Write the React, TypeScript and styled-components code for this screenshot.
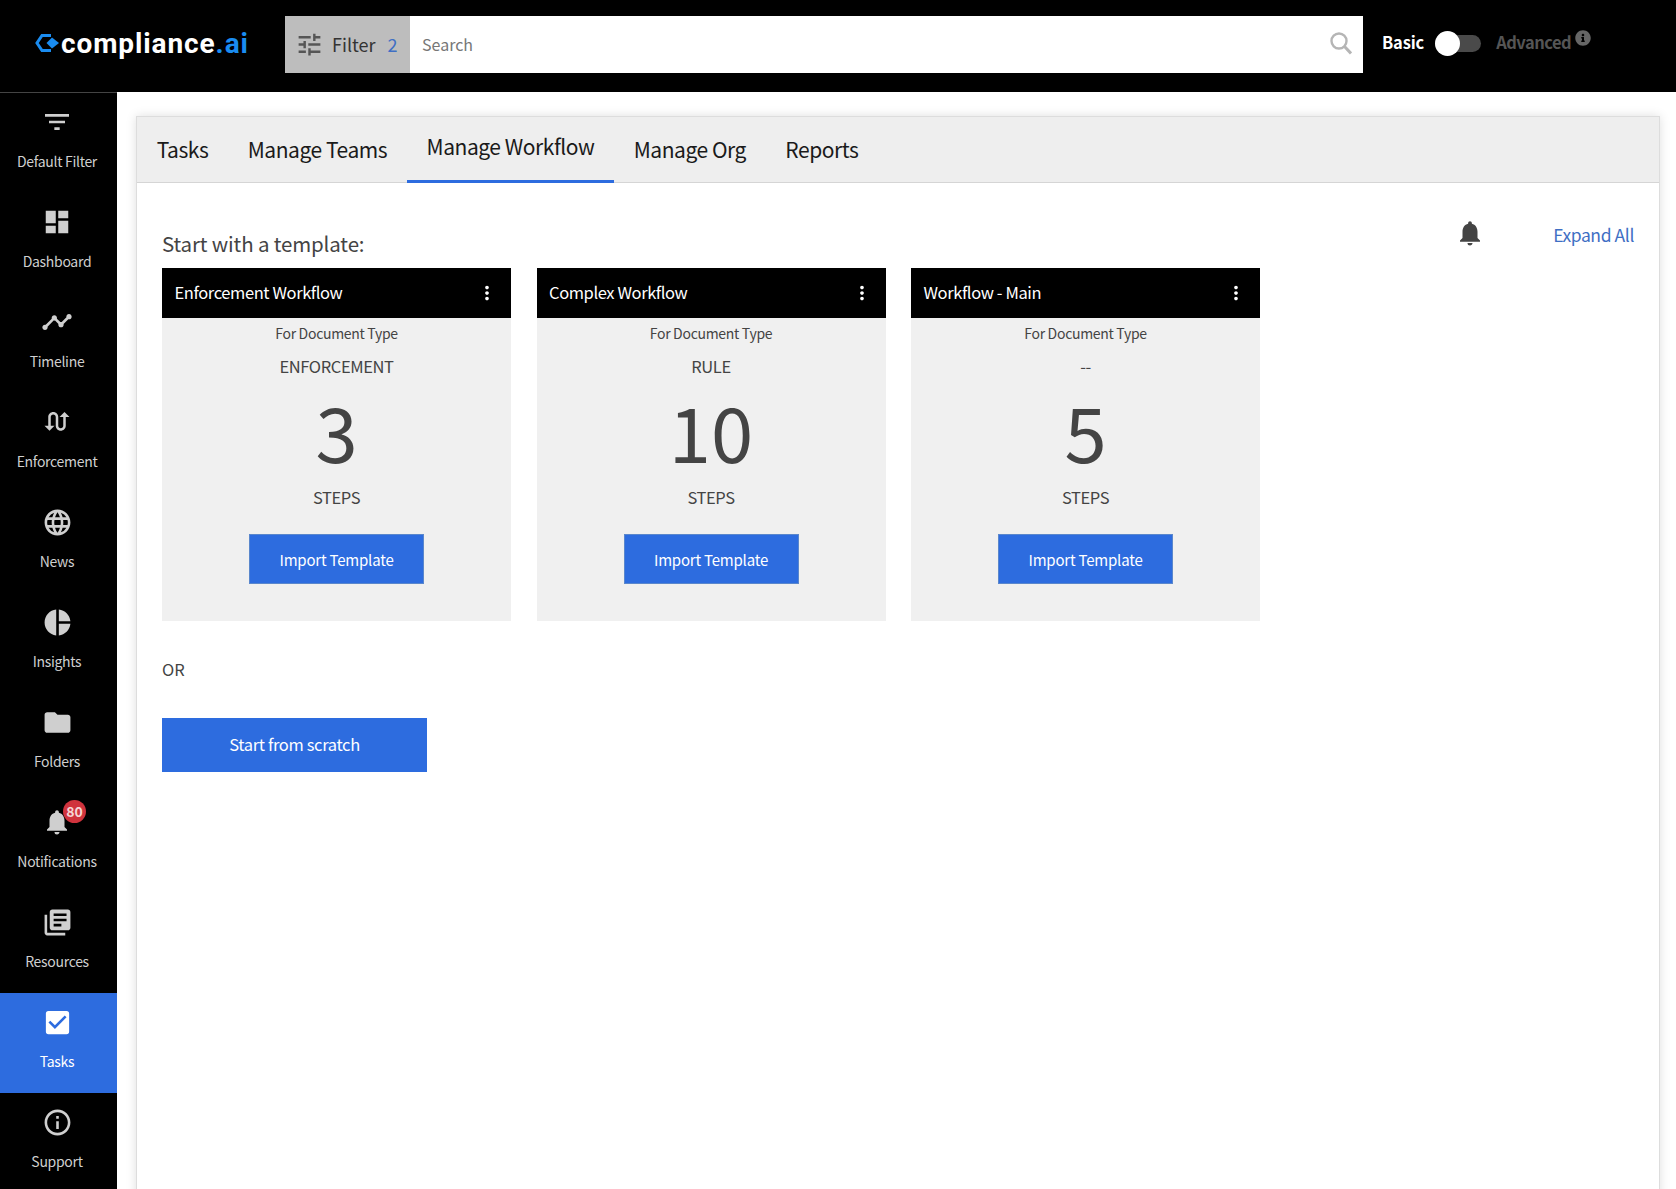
import styled, { createGlobalStyle } from 'styled-components';
import {
  MdCheckBox,
  MdDashboard,
  MdFilterList,
  MdFolder,
  MdInfoOutline,
  MdLanguage,
  MdLibraryBooks,
  MdMoreVert,
  MdNotifications,
  MdPieChart,
  MdSwapCalls,
  MdTimeline,
  MdTune,
} from 'react-icons/md';
import { FaInfoCircle } from 'react-icons/fa';

const FONT = '"Noto Sans CJK JP", "Noto Sans", sans-serif';

const GlobalStyle = createGlobalStyle`
  html, body {
    margin: 0;
    padding: 0;
    height: 100%;
    overflow: hidden;
    background: #fff;
    font-family: ${FONT};
  }
  * {
    box-sizing: border-box;
  }
`;

const Page = styled.div`
  height: 100vh;
  display: flex;
  flex-direction: column;
  overflow: hidden;
`;

const TopBar = styled.header`
  flex: 0 0 92px;
  background: #000;
  display: flex;
  align-items: flex-start;
`;

const Logo = styled.div`
  width: 285px;
  height: 86px;
  padding-left: 35px;
  display: flex;
  align-items: center;
  gap: 2px;
`;

const LogoText = styled.span`
  font-family: 'Roboto', sans-serif;
  font-weight: 700;
  font-size: 28px;
  letter-spacing: 0.9px;
  color: #fff;
  span {
    color: #1a8cf0;
  }
`;

const FilterButton = styled.div`
  margin-top: 16px;
  width: 125px;
  height: 57px;
  background: #bdbdbd;
  display: flex;
  align-items: center;
  padding: 0 0 2px 10px;
  color: #333;
  font-size: 18px;
  svg {
    color: #555;
    margin: 2px 8px 0 0;
  }
`;

const FilterCount = styled.span`
  color: #3f6fc4;
  margin-left: 12px;
`;

const SearchBox = styled.div`
  margin-top: 16px;
  width: 953px;
  height: 57px;
  background: #fff;
  display: flex;
  align-items: center;
  justify-content: space-between;
  padding: 0 11px 2px 12px;
  color: #777;
  font-size: 16px;
`;

const ModeSwitch = styled.div`
  height: 86px;
  margin-left: 19px;
  display: flex;
  align-items: center;
`;

const ModeLabel = styled.span<{ $active?: boolean }>`
  font-weight: 700;
  font-size: 16.5px;
  letter-spacing: ${(p) => (p.$active ? '-0.15px' : '-0.5px')};
  padding-bottom: 2px;
  color: ${(p) => (p.$active ? '#fff' : '#555')};
`;

const Toggle = styled.div`
  position: relative;
  width: 46px;
  height: 17px;
  margin: 0 15px 0 11px;
  border-radius: 9px;
  background: #4a4a4a;
`;

const ToggleKnob = styled.div`
  position: absolute;
  left: 0;
  top: -4px;
  width: 25px;
  height: 25px;
  border-radius: 50%;
  background: #fff;
`;

const InfoMark = styled.span`
  display: flex;
  color: #666;
  margin: -10px 0 0 4px;
`;

const Body = styled.div`
  flex: 1;
  display: flex;
  min-height: 0;
`;

const Sidebar = styled.nav`
  flex: 0 0 117px;
  background: #000;
  border-top: 1px solid #444;
`;

const NavItem = styled.div<{ $active?: boolean }>`
  height: 100px;
  padding: 16px 3px 0 0;
  display: flex;
  flex-direction: column;
  align-items: center;
  background: ${(p) => (p.$active ? '#2d6cdf' : 'transparent')};
  color: ${(p) => (p.$active ? '#fff' : '#cfcfcf')};
`;

const NavIcon = styled.div`
  position: relative;
  height: 26px;
  display: flex;
  align-items: center;
  justify-content: center;
`;

const NavBadge = styled.span`
  position: absolute;
  left: 21px;
  top: -9px;
  width: 23px;
  height: 23px;
  border-radius: 50%;
  background: #d0333d;
  color: #f5d5d5;
  font-size: 14px;
  font-weight: 700;
  line-height: 23px;
  text-align: center;
`;

const NavLabel = styled.div`
  margin-top: 16px;
  font-size: 14px;
  letter-spacing: -0.3px;
  line-height: 20px;
  white-space: nowrap;
`;

const Main = styled.main`
  flex: 1;
  min-width: 0;
  padding: 24px 16px 0 19px;
`;

const Panel = styled.section`
  height: 1200px;
  border: 1px solid #ddd;
  box-shadow: 0 0 10px rgba(0, 0, 0, 0.13);
  background: #fff;
`;

const TabBar = styled.div`
  height: 66px;
  background: #eee;
  border-bottom: 1px solid #d5d5d5;
  display: flex;
`;

const Tab = styled.div<{ $active?: boolean }>`
  height: 66px;
  padding: 0 19.7px ${(p) => (p.$active ? '6px' : '2px')};
  display: flex;
  align-items: center;
  font-size: 21px;
  letter-spacing: -0.45px;
  color: #1a1a1a;
  border-bottom: ${(p) => (p.$active ? '3px solid #2d6cdf' : 'none')};
`;

const Content = styled.div`
  padding: 0 25px 0 25px;
`;

const ContentHead = styled.div`
  height: 85px;
  padding-top: 36px;
  display: flex;
  justify-content: space-between;
  align-items: flex-start;
`;

const TemplateTitle = styled.h2`
  margin: 9px 0 0;
  font-size: 20.5px;
  letter-spacing: -0.15px;
  font-weight: 400;
  line-height: 30px;
  color: #444;
`;

const HeadTools = styled.div`
  height: 30px;
  display: flex;
  align-items: center;
  gap: 68px;
  color: #444;
  svg {
    margin-top: -2px;
  }
`;

const ExpandAll = styled.a`
  color: #3f6fc4;
  font-size: 17.5px;
  letter-spacing: -0.4px;
`;

const Cards = styled.div`
  display: flex;
  gap: 25.5px;
`;

const Card = styled.article`
  width: 349px;
  height: 353px;
  background: #f0f0f0;
  display: flex;
  flex-direction: column;
  align-items: center;
  color: #444;
`;

const CardHeader = styled.div`
  align-self: stretch;
  height: 50px;
  background: #000;
  color: #fff;
  padding: 0 13px 2px 12.5px;
  display: flex;
  align-items: center;
  justify-content: space-between;
  font-size: 16.5px;
  letter-spacing: -0.4px;
  svg {
    margin-top: 2px;
  }
`;

const DocLabel = styled.div`
  margin-top: 3px;
  font-size: 14px;
  letter-spacing: -0.3px;
  line-height: 24px;
`;

const DocType = styled.div`
  margin-top: 9px;
  font-size: 16.5px;
  letter-spacing: -0.4px;
  line-height: 24px;
`;

const StepCount = styled.div`
  margin-top: 7px;
  font-size: 76px;
  line-height: 90px;
`;

const StepLabel = styled.div`
  margin-top: 10px;
  font-size: 16.5px;
  letter-spacing: -0.4px;
  line-height: 24px;
`;

const ImportButton = styled.button`
  margin-top: 25px;
  width: 175px;
  height: 50px;
  padding: 0;
  background: #2d6cdf;
  border: 1px solid #5a87cc;
  color: #fff;
  font-family: ${FONT};
  font-size: 15px;
  letter-spacing: -0.2px;
`;

const OrText = styled.div`
  margin-top: 36px;
  font-size: 16.5px;
  line-height: 24px;
  color: #444;
`;

const ScratchButton = styled.button`
  display: block;
  margin-top: 37px;
  width: 265px;
  height: 54px;
  padding: 0 0 2px;
  background: #2d6cdf;
  border: none;
  color: #fff;
  font-family: ${FONT};
  font-size: 16.5px;
  letter-spacing: -0.35px;
`;

function LogoMark() {
  return (
    <svg width="24" height="18" viewBox="0 0 24 18">
      <path d="M16 1.5H7L2 9l5 7.5h9" fill="none" stroke="#1a8cf0" strokeWidth="3" />
      <path d="M17 3.5 24 9l-7 5.5L11.5 9Z" fill="#1a8cf0" />
    </svg>
  );
}

function SearchIcon() {
  return (
    <svg width="22" height="23" viewBox="0 0 22 23" fill="none" stroke="#b5b5b5">
      <circle cx="9" cy="9" r="7.5" strokeWidth="2.4" />
      <path d="M14.5 14.5 21 21.5" strokeWidth="3" />
    </svg>
  );
}

const navItems = [
  { label: 'Default Filter', icon: <MdFilterList size={32} /> },
  { label: 'Dashboard', icon: <MdDashboard size={30} /> },
  { label: 'Timeline', icon: <MdTimeline size={32} /> },
  { label: 'Enforcement', icon: <MdSwapCalls size={30} /> },
  { label: 'News', icon: <MdLanguage size={31} /> },
  { label: 'Insights', icon: <MdPieChart size={31} /> },
  { label: 'Folders', icon: <MdFolder size={31} /> },
  { label: 'Notifications', icon: <MdNotifications size={30} />, badge: 80 },
  { label: 'Resources', icon: <MdLibraryBooks size={31} /> },
  { label: 'Tasks', icon: <MdCheckBox size={31} />, active: true },
  { label: 'Support', icon: <MdInfoOutline size={31} /> },
];

const templates = [
  { name: 'Enforcement Workflow', docType: 'ENFORCEMENT', steps: 3 },
  { name: 'Complex Workflow', docType: 'RULE', steps: 10 },
  { name: 'Workflow - Main', docType: '--', steps: 5 },
];

const tabs = ['Tasks', 'Manage Teams', 'Manage Workflow', 'Manage Org', 'Reports'];

export default function App() {
  return (
    <Page>
      <GlobalStyle />
      <TopBar>
        <Logo>
          <LogoMark />
          <LogoText>
            compliance<span>.ai</span>
          </LogoText>
        </Logo>
        <FilterButton>
          <MdTune size={29} />
          Filter
          <FilterCount>2</FilterCount>
        </FilterButton>
        <SearchBox>
          Search
          <SearchIcon />
        </SearchBox>
        <ModeSwitch>
          <ModeLabel $active>Basic</ModeLabel>
          <Toggle>
            <ToggleKnob />
          </Toggle>
          <ModeLabel>Advanced</ModeLabel>
          <InfoMark>
            <FaInfoCircle size={16} />
          </InfoMark>
        </ModeSwitch>
      </TopBar>
      <Body>
        <Sidebar>
          {navItems.map((item) => (
            <NavItem key={item.label} $active={item.active}>
              <NavIcon>
                {item.icon}
                {item.badge && <NavBadge>{item.badge}</NavBadge>}
              </NavIcon>
              <NavLabel>{item.label}</NavLabel>
            </NavItem>
          ))}
        </Sidebar>
        <Main>
          <Panel>
            <TabBar>
              {tabs.map((tab) => (
                <Tab key={tab} $active={tab === 'Manage Workflow'}>
                  {tab}
                </Tab>
              ))}
            </TabBar>
            <Content>
              <ContentHead>
                <TemplateTitle>Start with a template:</TemplateTitle>
                <HeadTools>
                  <MdNotifications size={30} />
                  <ExpandAll>Expand All</ExpandAll>
                </HeadTools>
              </ContentHead>
              <Cards>
                {templates.map((t) => (
                  <Card key={t.name}>
                    <CardHeader>
                      {t.name}
                      <MdMoreVert size={22} />
                    </CardHeader>
                    <DocLabel>For Document Type</DocLabel>
                    <DocType>{t.docType}</DocType>
                    <StepCount>{t.steps}</StepCount>
                    <StepLabel>STEPS</StepLabel>
                    <ImportButton>Import Template</ImportButton>
                  </Card>
                ))}
              </Cards>
              <OrText>OR</OrText>
              <ScratchButton>Start from scratch</ScratchButton>
            </Content>
          </Panel>
        </Main>
      </Body>
    </Page>
  );
}
